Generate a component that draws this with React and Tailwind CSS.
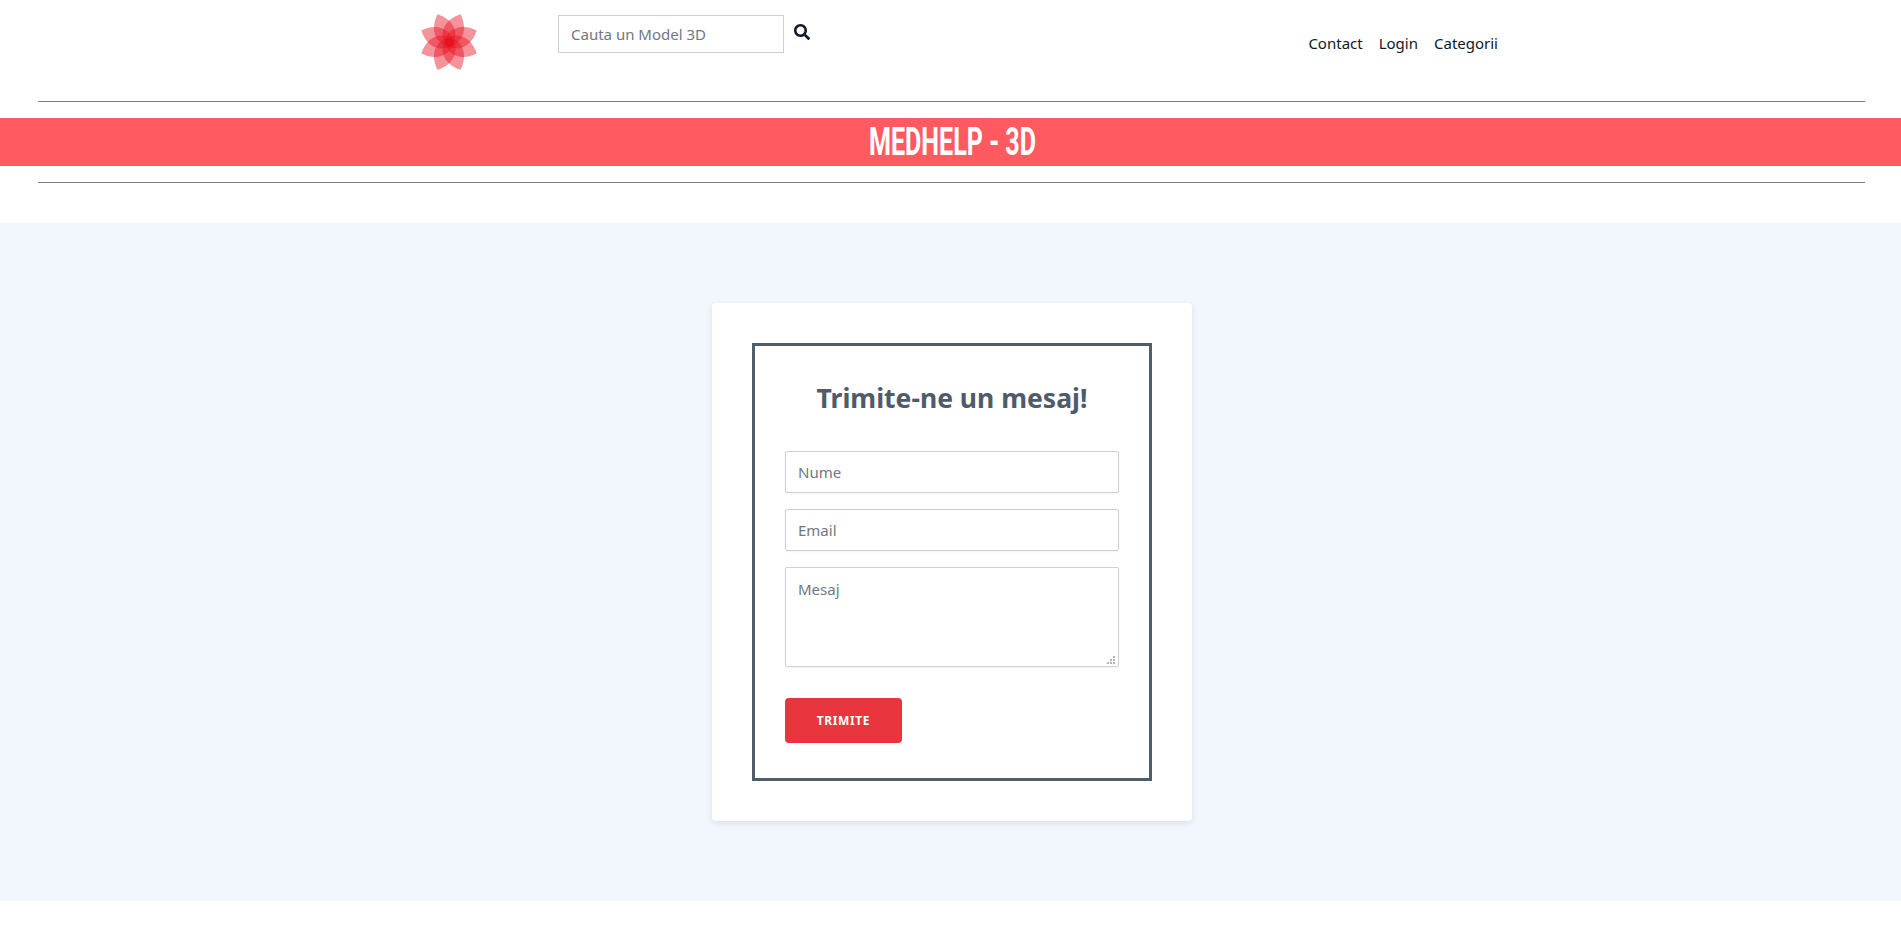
import { useState } from 'react';
import { FaSearch } from 'react-icons/fa';

const petals = [22.5, 67.5, 112.5, 157.5, 202.5, 247.5, 292.5, 337.5];

function Logo() {
  return (
    <svg width="58" height="58" viewBox="-29 -29 58 58" className="block">
      {petals.map((angle) => (
        <path
          key={angle}
          d="M0 5 C-13 -2 -14 -18 0 -30 C14 -18 13 -2 0 5 Z"
          fill="#e8101f"
          fillOpacity="0.45"
          transform={`rotate(${angle})`}
        />
      ))}
    </svg>
  );
}

// dotted resize corner of the textarea
function Grip() {
  const dots = [[6, 0], [3, 3], [6, 3], [0, 6], [3, 6], [6, 6]];
  return (
    <svg width="8" height="8" className="pointer-events-none absolute bottom-[3px] right-[4px]">
      {dots.map(([x, y]) => (
        <rect key={`${x}-${y}`} x={x} y={y} width="2" height="2" fill="#b5b5b5" />
      ))}
    </svg>
  );
}

export default function App() {
  const [form, setForm] = useState({ nume: '', email: '', mesaj: '' });

  const handleChange = (e) => {
    setForm(prev => ({ ...prev, [e.target.name]: e.target.value }));
  };

  return (
    <div className="min-h-[941px] overflow-x-hidden bg-white">
      <div className="w-[1904px] font-['Noto_Sans','Open_Sans',sans-serif] text-[#111827]">
        {/* Top bar */}
        <header className="flex h-[101px] items-start pl-[420px] pr-[406px]">
          <div className="mt-[13px] w-[138px]">
            <Logo />
          </div>
          <input
            type="text"
            placeholder="Cauta un Model 3D"
            className="mt-[15px] h-[38px] w-[226px] border border-[#cdd0d8] px-3 text-[15px] outline-none placeholder:text-[#6f7782]"
          />
          <FaSearch className="ml-[10px] mt-[24px] text-base text-[#111827]" />
          <nav className="ml-auto mt-[32px] flex gap-4 text-[15px] leading-[22px]">
            <a href="#">Contact</a>
            <a href="#">Login</a>
            <a href="#">Categorii</a>
          </nav>
        </header>

        <hr className="ml-[38px] mr-[39px] border-[#808080]" />
        <div className="mt-4 h-12 bg-[#ff5a5f] text-center font-['Roboto',sans-serif] text-[38px] font-bold leading-[48px] text-white">
          <span className="inline-block scale-x-[0.66]">MEDHELP - 3D</span>
        </div>
        <hr className="ml-[38px] mr-[39px] mt-4 border-[#808080]" />

        {/* Contact form */}
        <main className="mt-10 bg-[#f1f7fd] py-20">
          <div className="mx-auto w-[480px] rounded bg-white p-10 shadow-[0_2px_6px_rgba(0,0,0,0.1)]">
            <form className="h-[438px] border-[3px] border-[#505e6c] px-[30px] pt-7">
              <h2 className="mb-[29px] text-center text-[26.5px] font-bold leading-[48px] text-[#4f5b6a]">
                Trimite-ne un mesaj!
              </h2>
              <input
                name="nume"
                value={form.nume}
                onChange={handleChange}
                placeholder="Nume"
                className="mb-4 block h-[42px] w-full rounded-[2px] border border-[#cdd0d8] px-3 text-[15px] shadow-xs outline-none placeholder:text-[#6f7782]"
              />
              <input
                name="email"
                value={form.email}
                onChange={handleChange}
                placeholder="Email"
                className="mb-4 block h-[42px] w-full rounded-[2px] border border-[#cdd0d8] px-3 text-[15px] shadow-xs outline-none placeholder:text-[#6f7782]"
              />
              <div className="relative">
                <textarea
                  name="mesaj"
                  value={form.mesaj}
                  onChange={handleChange}
                  placeholder="Mesaj"
                  className="block h-[100px] w-full resize-none rounded-[2px] border border-[#cdd0d8] px-3 py-[10px] text-[15px] shadow-xs outline-none placeholder:text-[#6f7782]"
                />
                <Grip />
              </div>
              <button
                type="button"
                className="mt-[31px] h-[45px] w-[117px] rounded bg-[#e9353d] text-xs font-bold tracking-wider text-white"
              >
                TRIMITE
              </button>
            </form>
          </div>
        </main>
      </div>
    </div>
  );
}
